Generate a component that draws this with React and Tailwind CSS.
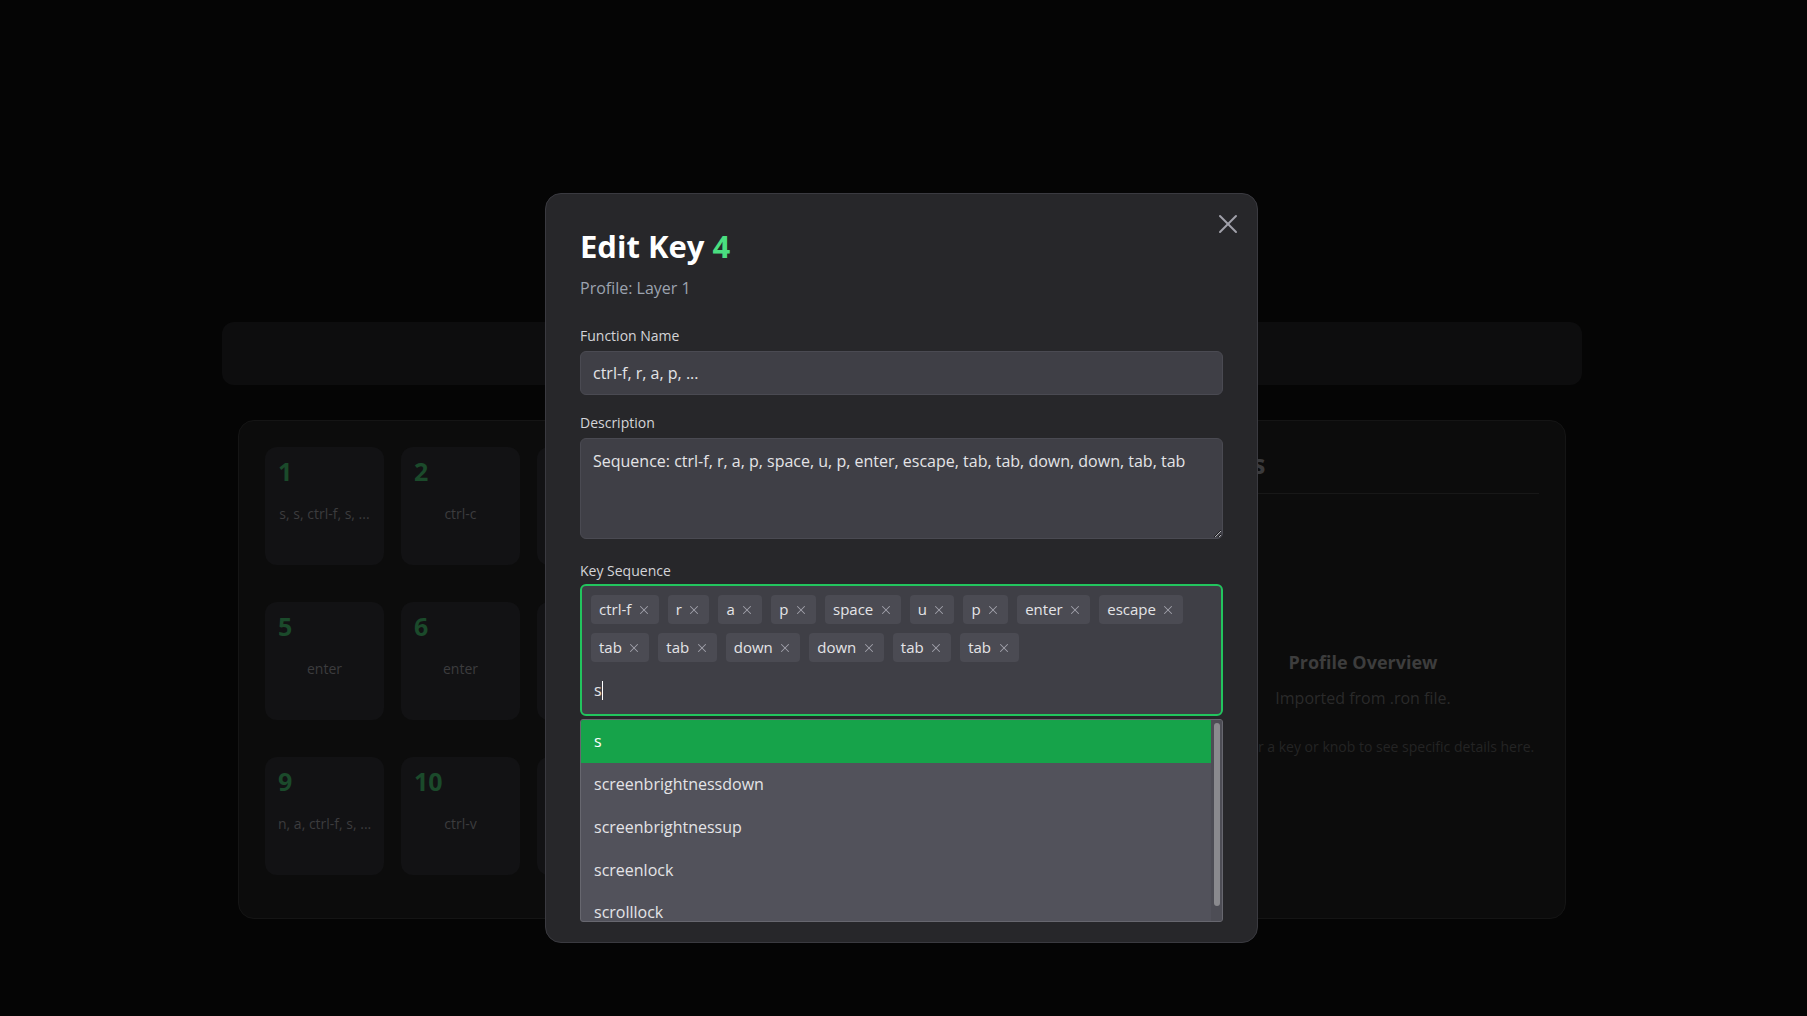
import React from "react";
import { X } from "lucide-react";

const FONT = { fontFamily: "'Open Sans', 'Noto Sans', sans-serif" };

const cards = [
  ["1", "s, s, ctrl-f, s, ..."],
  ["2", "ctrl-c"],
  ["3", "ctrl-z"],
  ["4", "ctrl-f, r, a, p, ..."],
  ["5", "enter"],
  ["6", "enter"],
  ["7", "tab"],
  ["8", "escape"],
  ["9", "n, a, ctrl-f, s, ..."],
  ["10", "ctrl-v"],
  ["11", "space"],
  ["12", "down"],
];

const chips = ["ctrl-f", "r", "a", "p", "space", "u", "p", "enter", "escape", "tab", "tab", "down", "down", "tab", "tab"];
const options = ["s", "screenbrightnessdown", "screenbrightnessup", "screenlock", "scrolllock"];

function Card({ n, t }) {
  return (
    <div className="h-[118px] rounded-xl bg-[#121214] pt-[9px] px-[13px] flex flex-col">
      <div className="text-[25px] leading-[30px] font-bold text-[#1b4a2b]">{n}</div>
      <div className="mt-[18px] text-center text-[14px] leading-5 text-[#3c3c3e] whitespace-nowrap">{t}</div>
    </div>
  );
}

export default function App() {
  return (
    <div className="relative w-full h-[1016px] bg-[#050505] overflow-hidden" style={FONT}>
      {/* background page */}
      <div className="pt-[322px] w-[1360px] ml-[222px]">
        <div className="h-[63px] rounded-xl bg-[#0d0d0e]" />
        <div className="mt-[35px] mx-[16px] h-[499px] rounded-2xl bg-[#0c0c0c] border border-[#151515] p-[26px] flex">
          <div className="grid grid-cols-[repeat(4,119px)] gap-x-[17px] gap-y-[37px] content-start">
            {cards.map(([n, t], i) => (
              <Card key={i} n={n} t={t} />
            ))}
          </div>
          <div className="flex-1" />
          <div className="w-[352px] flex flex-col">
            <div className="pb-[12px] border-b border-[#181818]">
              <div className="text-[26px] leading-[34px] font-bold text-[#3a3a3c] -ml-[12px]">Details</div>
            </div>
            <div className="mt-[154px] text-center">
              <div className="text-[18px] leading-7 font-bold text-[#3d3d3d]">Profile Overview</div>
              <div className="mt-[10px] text-[16px] leading-6 text-[#2a2a2a]">Imported from .ron file.</div>
              <div className="mt-[27px] text-[14px] leading-5 text-[#242424]">Hover over a key or knob to see specific details here.</div>
            </div>
          </div>
        </div>
      </div>

      {/* modal */}
      <div className="absolute left-[545px] top-[193px] w-[713px] rounded-2xl border border-[#3a3a40] bg-[#27272a] px-[34px] pt-[34px] pb-[20px]">
        <button className="absolute right-[13px] top-[14px] text-[#a1a1aa]">
          <X size={32} strokeWidth={1.5} />
        </button>
        <h2 className="text-[31px] leading-[36px] font-bold text-white">
          Edit Key <span className="text-[#4ade80]">4</span>
        </h2>
        <div className="mt-3 text-base leading-6 text-[#9ca3af]">Profile: Layer 1</div>

        <div className="mt-[26px] text-sm leading-5 font-medium text-[#d4d4d8]">Function Name</div>
        <div className="mt-[5px] h-11 rounded-md border border-[#4a4a52] bg-[#3f3f46] px-3 flex items-center text-base text-[#e4e4e7]">
          ctrl-f, r, a, p, ...
        </div>

        <div className="mt-[18px] text-sm leading-5 font-medium text-[#d4d4d8]">Description</div>
        <textarea
          readOnly
          className="mt-[5px] block w-full h-[101px] rounded-md border border-[#4a4a52] bg-[#3f3f46] px-3 pt-[10px] text-base leading-6 text-[#e4e4e7] outline-none"
          style={FONT}
          value="Sequence: ctrl-f, r, a, p, space, u, p, enter, escape, tab, tab, down, down, tab, tab"
        />

        <div className="mt-[22px] text-sm leading-5 font-medium text-[#d4d4d8]">Key Sequence</div>
        <div className="mt-[3px] rounded-md border-2 border-[#22c55e] bg-[#3f3f46] px-[9px] pt-[9px] pb-[7px] flex flex-wrap gap-[9px]">
          {chips.map((c, i) => (
            <span key={i} className="h-[29px] rounded bg-[#4b4b53] pl-[8px] pr-[8px] flex items-center gap-[5.5px] text-[15px] font-medium text-[#e4e4e7]">
              {c}
              <X size={14} strokeWidth={1.75} className="text-[#a1a1aa]" />
            </span>
          ))}
          <div className="basis-full h-[36px] flex items-center pl-[3px] pt-[2px] text-base text-[#e4e4e7]">
            <span>s</span>
            <span className="inline-block w-px h-[19px] bg-white" />
          </div>
        </div>

        <div className="mt-[3px] h-[203px] rounded-[3px] border border-[#67676f] bg-[#52525b] flex overflow-hidden">
          <div className="flex-1">
            {options.map((o, i) => (
              <div
                key={o}
                className={
                  "h-[42.75px] flex items-center px-[13px] text-base " +
                  (i === 0 ? "bg-[#16a34a] text-white" : "text-[#e4e4e7]")
                }
              >
                {o}
              </div>
            ))}
          </div>
          <div className="w-[11px] bg-[#4d4d55] flex justify-center pt-[3px]">
            <div className="w-[6px] h-[183px] rounded-full bg-[#8a8a8e]" />
          </div>
        </div>
      </div>
    </div>
  );
}
